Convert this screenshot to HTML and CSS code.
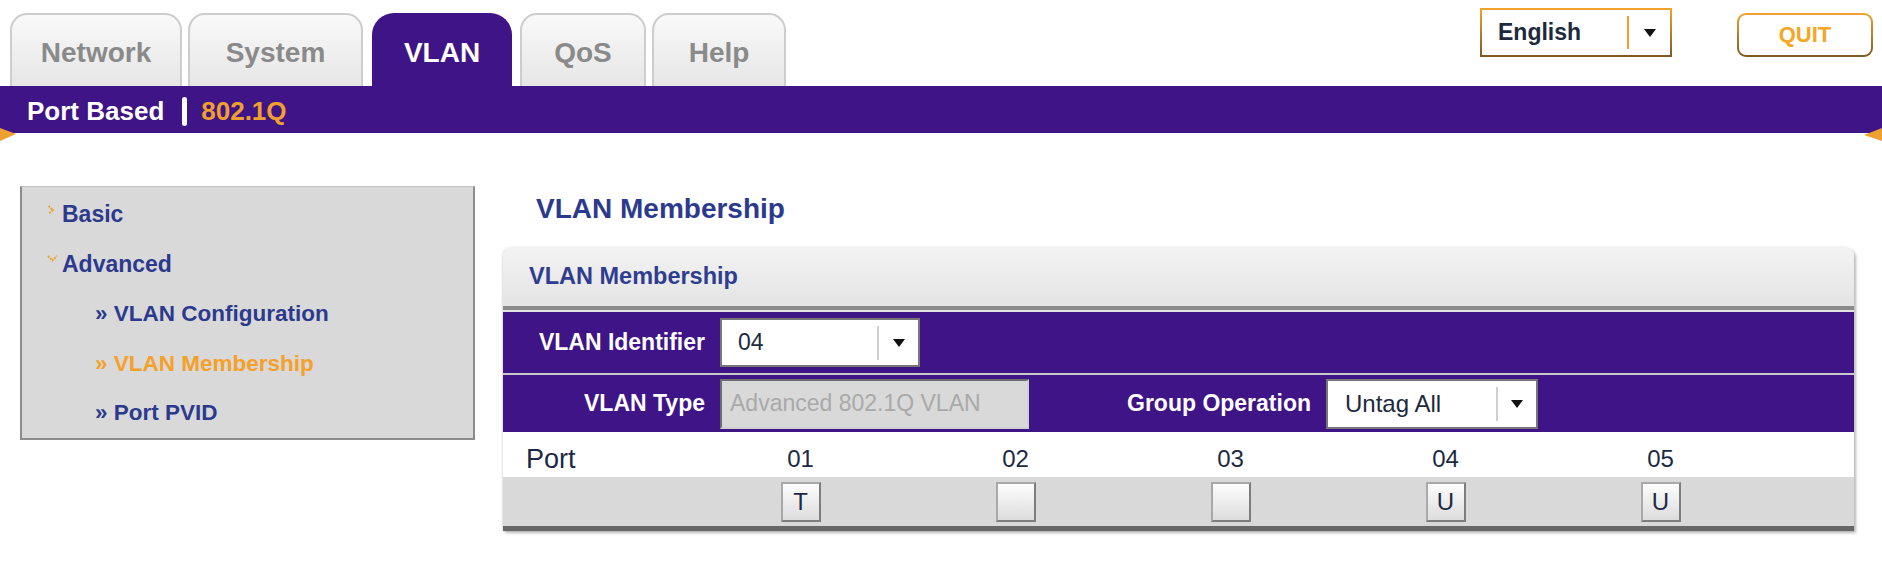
FILE: index.html
```html
<!DOCTYPE html>
<html lang="en">
<head>
<meta charset="utf-8">
<title>VLAN Membership</title>
<link rel="stylesheet" href="styles.css">
</head>
<body>
<header class="top">
  <nav class="tabs">
    <div class="tab tab-network">Network</div>
    <div class="tab tab-system">System</div>
    <div class="tab tab-vlan active">VLAN</div>
    <div class="tab tab-qos">QoS</div>
    <div class="tab tab-help">Help</div>
  </nav>
  <div class="tools">
    <div class="lang">
      <span class="lang-text">English</span>
      <span class="lang-div"></span>
      <span class="lang-arrow"><span class="arrow"></span></span>
    </div>
    <div class="quit">QUIT</div>
  </div>
</header>
<div class="subbar">
  <span class="sub-item">Port Based</span>
  <span class="sub-sep"></span>
  <span class="sub-item sub-active">802.1Q</span>
  <svg class="fold fold-left" width="16" height="14" viewBox="0 0 16 14"><polygon points="0,0 16,6 0,13" fill="#f0a030"/></svg>
  <svg class="fold fold-right" width="18" height="14" viewBox="0 0 18 14"><polygon points="18,0 0,7 18,13" fill="#f0a030"/></svg>
</div>
<main class="main">
  <aside class="side">
    <div class="m-top"><svg class="mk mk-right" width="15" height="10" viewBox="0 0 15 10"><polyline points="1.5,1 6,5 1.5,9" fill="none" stroke="#f0a030" stroke-width="2" stroke-dasharray="2 1"/></svg>Basic</div>
    <div class="m-top"><svg class="mk mk-down" width="15" height="7" viewBox="0 0 15 7"><polyline points="1,1 5.5,5.5 10,1" fill="none" stroke="#f0a030" stroke-width="2" stroke-dasharray="2 1"/></svg>Advanced</div>
    <div class="m-sub">» VLAN Configuration</div>
    <div class="m-sub m-active">» VLAN Membership</div>
    <div class="m-sub">» Port PVID</div>
  </aside>
  <section class="content">
    <h1 class="title">VLAN Membership</h1>
    <div class="panel">
      <div class="panel-head">VLAN Membership</div>
      <div class="row-id">
        <span class="lbl">VLAN Identifier</span>
        <div class="sel sel-id">
          <span class="sel-text">04</span>
          <span class="sel-div"></span>
          <span class="sel-arrow"><span class="arrow"></span></span>
        </div>
      </div>
      <div class="row-type">
        <span class="lbl">VLAN Type</span>
        <div class="ro-input">Advanced 802.1Q VLAN</div>
        <span class="lbl">Group Operation</span>
        <div class="sel sel-group">
          <span class="sel-text">Untag All</span>
          <span class="sel-div"></span>
          <span class="sel-arrow"><span class="arrow"></span></span>
        </div>
      </div>
      <div class="port-head">
        <span class="port-lbl">Port</span>
        <span class="port-num">01</span>
        <span class="port-num">02</span>
        <span class="port-num">03</span>
        <span class="port-num">04</span>
        <span class="port-num">05</span>
        <span></span>
      </div>
      <div class="port-boxes">
        <span></span>
        <span class="cell"><span class="pbtn">T</span></span>
        <span class="cell"><span class="pbtn"></span></span>
        <span class="cell"><span class="pbtn"></span></span>
        <span class="cell"><span class="pbtn">U</span></span>
        <span class="cell"><span class="pbtn">U</span></span>
        <span></span>
      </div>
    </div>
  </section>
</main>
</body>
</html>
```

FILE: styles.css
```css
* { box-sizing: border-box; }
html, body { margin: 0; padding: 0; background: #ffffff; }
body {
  font-family: "Liberation Sans", Arial, sans-serif;
  width: 1882px;
  height: 566px;
  overflow: hidden;
}

/* ---------- top header ---------- */
.top {
  height: 86px;
  display: flex;
  justify-content: space-between;
}
.tabs {
  display: flex;
  align-items: flex-end;
  padding-left: 10px;
  gap: 6px;
}
.tab {
  height: 73px;
  padding-top: 22px;
  text-align: center;
  font-size: 28px;
  font-weight: bold;
  line-height: 32px;
  color: #8a8a8a;
  border: 2px solid #cdcdcd;
  border-bottom: none;
  border-radius: 17px 17px 0 0;
  background: linear-gradient(#f9f9f9, #e6e6e6);
}
.tab-network { width: 172px; }
.tab-system { width: 175px; }
.tab-vlan { width: 140px; margin-left: 3px; margin-right: 2px; }
.tab-qos { width: 126px; }
.tab-help { width: 134px; }
.tab.active {
  color: #ffffff;
  background: #3e1486;
  border-color: #3e1486;
  border-radius: 22px 22px 0 0;
}

.tools {
  display: flex;
  align-items: flex-start;
  gap: 65px;
  padding-top: 8px;
  padding-right: 9px;
}
.lang {
  width: 192px;
  height: 49px;
  display: flex;
  align-items: center;
  border: 2px solid transparent;
  background: linear-gradient(#ffffff, #ffffff) padding-box,
              linear-gradient(#f2a32e, #7d5a22) border-box;
}
.lang-text {
  flex: 1;
  padding-left: 16px;
  font-size: 23px;
  font-weight: bold;
  color: #1d2a3c;
}
.lang-div {
  width: 2px;
  height: 33px;
  background: #f0a030;
}
.lang-arrow {
  width: 41px;
  display: flex;
  justify-content: center;
}
.arrow {
  width: 0;
  height: 0;
  border-left: 6px solid transparent;
  border-right: 6px solid transparent;
  border-top: 8px solid #111111;
}
.quit {
  margin-top: 5px;
  width: 136px;
  height: 44px;
  display: flex;
  align-items: center;
  justify-content: center;
  font-size: 22px;
  font-weight: bold;
  color: #f5a623;
  border: 2px solid transparent;
  border-radius: 9px;
  background: linear-gradient(#ffffff, #ffffff) padding-box,
              linear-gradient(#f2a32e, #7d5a22) border-box;
}

/* ---------- purple sub bar ---------- */
.subbar {
  position: relative;
  height: 47px;
  background: #3e1486;
  display: flex;
  align-items: center;
  padding-left: 27px;
  padding-top: 3px;
}
.sub-item {
  font-size: 26px;
  font-weight: bold;
  color: #ffffff;
}
.sub-active { color: #f0a030; }
.sub-sep {
  width: 5px;
  height: 29px;
  margin: 0 14px 0 18px;
  background: #ffffff;
  border-radius: 3px;
}
.fold { position: absolute; top: 42px; }
.fold-left { left: 0; }
.fold-right { right: 0; }

/* ---------- main ---------- */
.main {
  display: flex;
  padding: 53px 0 0 20px;
  gap: 28px;
}
.side {
  width: 455px;
  align-self: flex-start;
  background: #d9d9d9;
  border: 2px solid #8c8c8c;
  border-top: 1px solid #c2c2c2;
  padding-top: 3px;
  color: #2c3a8e;
  font-weight: bold;
}
.m-top {
  padding-left: 25px;
  font-size: 23px;
  line-height: 49.6px;
}
.mk { display: inline-block; }
.mk-right { vertical-align: 7px; }
.mk-down { vertical-align: 10px; }
.m-sub {
  padding-left: 73px;
  font-size: 22.5px;
  line-height: 49.6px;
}
.m-active { color: #f5a02a; }

.content { width: 1351px; }
.title {
  margin: 7px 0 22px 0;
  padding-left: 33px;
  font-size: 28px;
  line-height: 32px;
  font-weight: bold;
  color: #2c3a8e;
}

.panel {
  border-radius: 9px 9px 0 0;
  background: #ffffff;
  border-bottom: 5px solid #676767;
  box-shadow: 2px 2px 3px rgba(0, 0, 0, 0.28), -1px 0 2px rgba(0, 0, 0, 0.12);
}
.panel-head {
  height: 65px;
  display: flex;
  align-items: center;
  padding-left: 26px;
  padding-bottom: 4px;
  font-size: 23.5px;
  font-weight: bold;
  color: #2f3d91;
  border-radius: 9px 9px 0 0;
  border-bottom: 2px solid #e2e2e2;
  background: linear-gradient(#f3f3f3, #e4e4e4 94%, #8a8a8a 94%);
}

.lbl {
  font-size: 23px;
  font-weight: bold;
  color: #ffffff;
  text-align: right;
}
.row-id {
  height: 63px;
  display: flex;
  align-items: center;
  gap: 15px;
  background: #3e1486;
  border-bottom: 2px solid #c8c8c8;
}
.row-id .lbl { width: 202px; }
.row-type {
  height: 57px;
  display: grid;
  grid-template-columns: 202px 309px 267px 212px;
  column-gap: 15px;
  align-items: center;
  background: #3e1486;
}

.sel {
  display: flex;
  align-items: center;
  background: #ffffff;
  border: 2px solid #777777;
  font-size: 23px;
  color: #1d2a3c;
}
.sel-id { width: 200px; height: 49px; }
.sel-group { width: 212px; height: 50px; }
.sel-text { flex: 1; padding-left: 16px; }
.sel-group .sel-text { padding-left: 17px; font-size: 24px; }
.sel-div {
  width: 2px;
  height: 34px;
  background: #cfcfcf;
}
.sel-arrow {
  width: 39px;
  display: flex;
  justify-content: center;
}
.sel-group .sel-arrow { width: 38px; }

.ro-input {
  height: 50px;
  display: flex;
  align-items: center;
  padding-left: 8px;
  font-size: 23px;
  color: #a9a9a9;
  background: #d9d9d9;
  border: 2px solid;
  border-color: #6c6c6c #d0d0d0 #d0d0d0 #6c6c6c;
}

.port-head, .port-boxes {
  display: grid;
  grid-template-columns: 190px repeat(5, 215px) 1fr;
}
.port-head {
  height: 45px;
  padding-top: 9px;
  line-height: 36px;
  font-size: 24px;
  color: #1b2a44;
  background: #ffffff;
}
.port-lbl { padding-left: 23px; font-size: 27px; }
.port-num { text-align: center; }
.port-boxes {
  height: 49px;
  align-items: center;
  background: #d9d9d9;
}
.cell { display: flex; justify-content: center; }
.pbtn {
  width: 40px;
  height: 40px;
  display: flex;
  align-items: center;
  justify-content: center;
  font-size: 24px;
  color: #1b2a44;
  border: 2px solid;
  border-color: #a9a9a9 #7d7d7d #7d7d7d #a9a9a9;
  background: linear-gradient(#fdfdfd, #dcdcdc);
}
```
